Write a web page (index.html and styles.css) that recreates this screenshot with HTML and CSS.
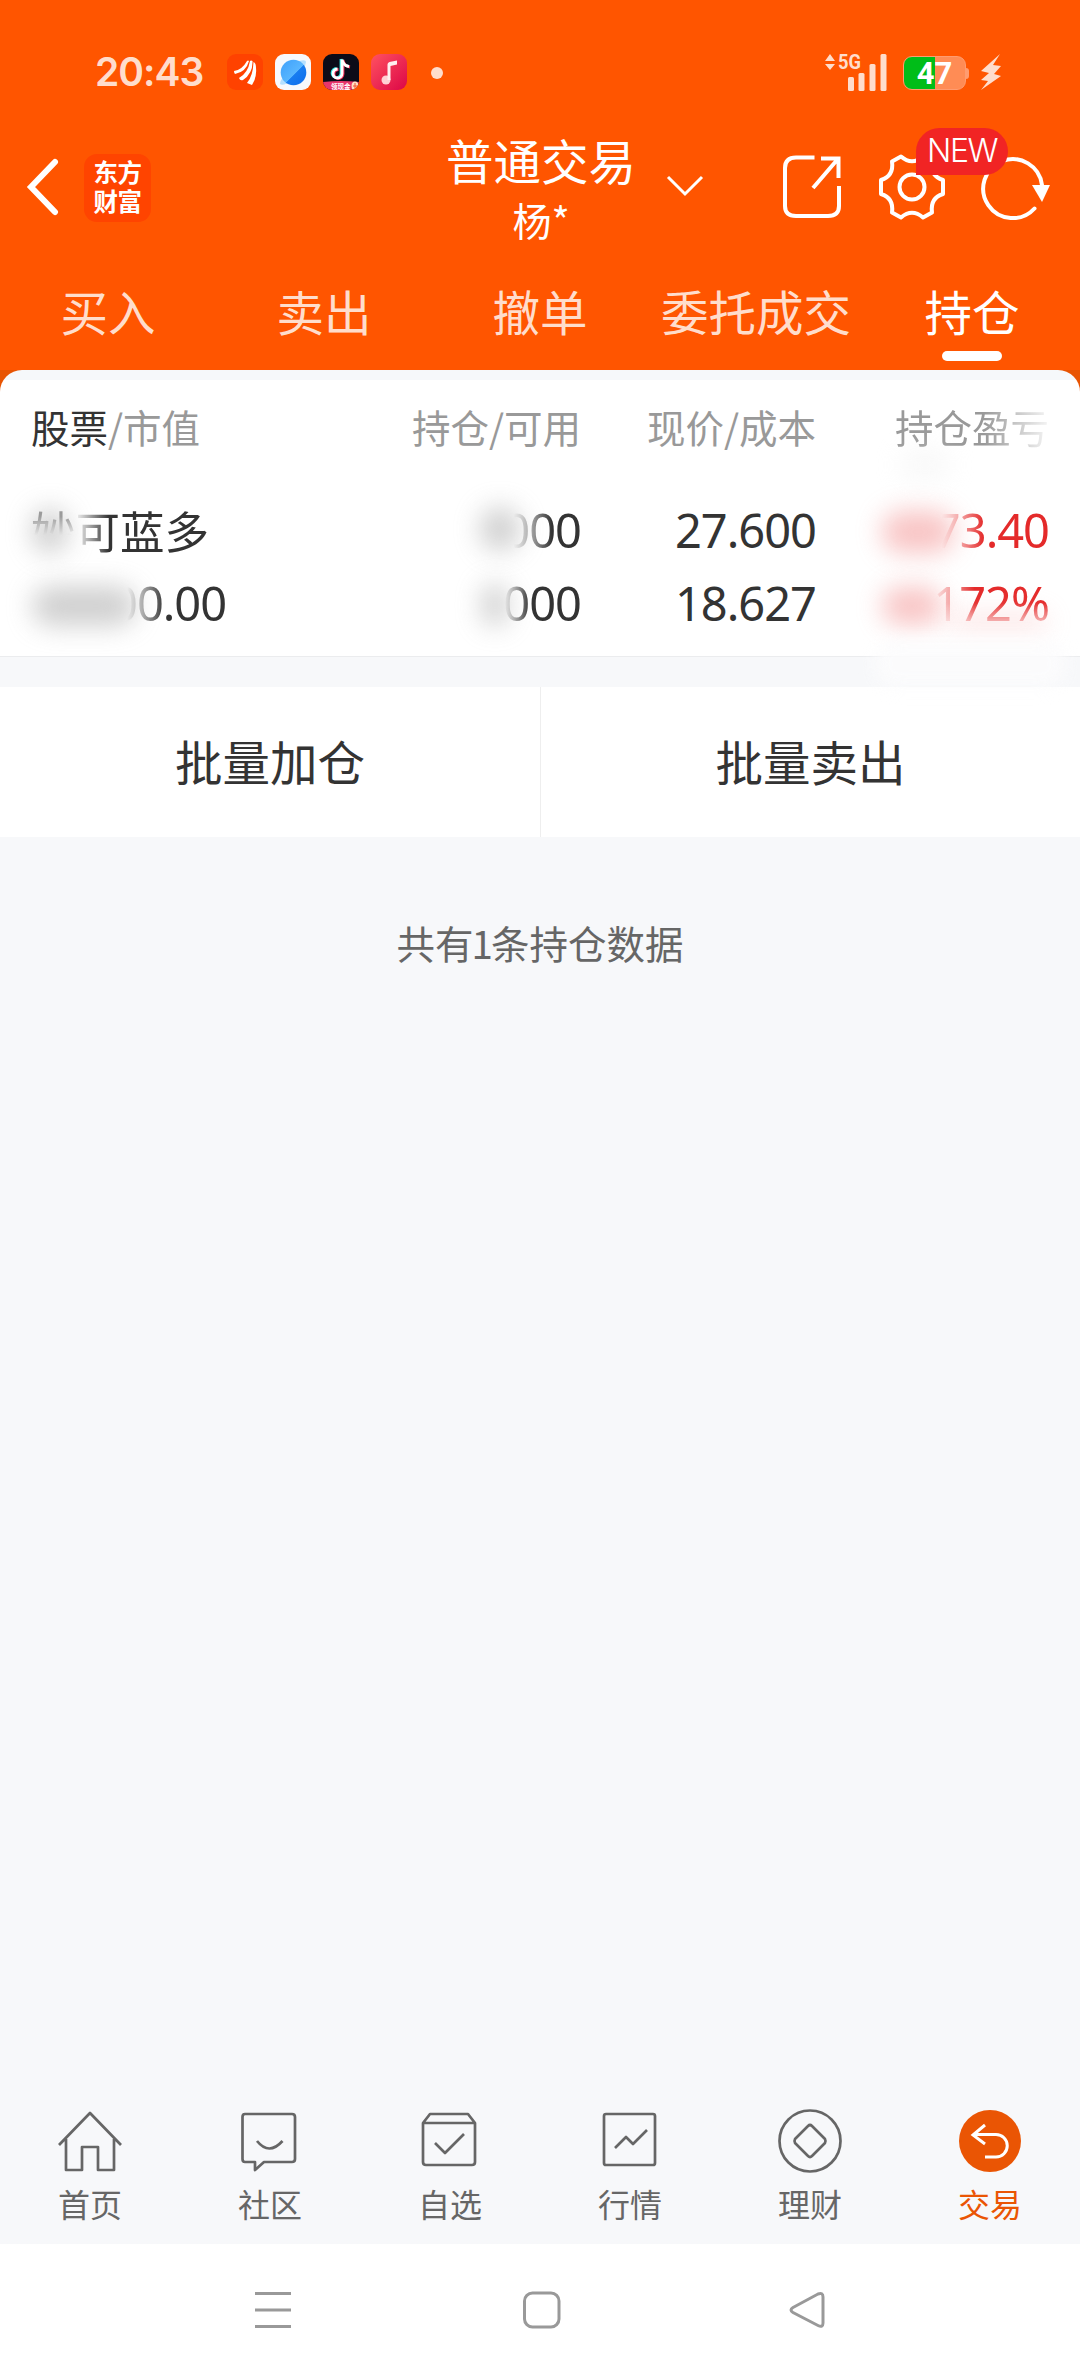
FILE: index.html
```html
<!DOCTYPE html>
<html lang="zh-CN">
<head>
<meta charset="utf-8">
<title>持仓</title>
<link rel="stylesheet" href="styles.css">
</head>
<body>
<div class="screen">
  <header class="header">
    <div class="status">
      <span class="clock">20:43</span>
      <div class="apps">
        <svg width="36" height="36" viewBox="0 0 36 36"><rect width="36" height="36" rx="9" fill="#ff4200"/><path d="M7 17Q15 16 20 7Q21 6 22 7Q19 18 8 20Q7 19 7 17ZM12 24Q21 19 23 7Q24 6 25.500 7Q26 19 16 26Q13 27 12 24ZM20 29Q26 22 26.500 8Q29 9 29 14Q30 23 25 31Z" fill="#fff"/></svg>
        <svg width="36" height="36" viewBox="0 0 36 36"><defs><linearGradient id="planet" x1="0" y1="0" x2="1" y2="1"><stop offset="0" stop-color="#3fa0fa"/><stop offset=".55" stop-color="#58b6ff"/><stop offset=".56" stop-color="#187cf0"/><stop offset="1" stop-color="#0c6cec"/></linearGradient></defs><rect width="36" height="36" rx="9" fill="#f7f9fc"/><path d="M24 7Q31 5 31 8Q30 17 19 25Q8 33 5 30Q5 27 8 23Z" fill="#b5e0ff"/><circle cx="18.500" cy="18.500" r="12.800" fill="url(#planet)"/></svg>
        <svg width="36" height="36" viewBox="0 0 36 36"><defs><clipPath id="tile"><rect width="36" height="36" rx="9"/></clipPath></defs><g clip-path="url(#tile)"><rect width="36" height="36" fill="#0c0b18"/><g fill="none" stroke-width="2.800"><path d="M18 5V19A4.500 4.500 0 1 1 13.500 14.500M18 5Q19 11 25 12" stroke="#2ee6e2"/><path d="M20 6V20A4.500 4.500 0 1 1 15.500 15.500M20 6Q21 12 27 13" stroke="#f9325d"/><path d="M19 5.500V19.500A4.500 4.500 0 1 1 14.500 15M19 5.500Q20 11.500 26 12.500" stroke="#fff"/></g><path d="M0 28Q18 26 36 28V36H0Z" fill="#e8356b"/><text x="8" y="34.500" class="tile-label">领现金</text><ellipse cx="32" cy="32" rx="3.500" ry="4.500" fill="#ffe2c4"/><path d="M32 29v5M30 32h4" stroke="#f05030"/></g></svg>
        <svg width="36" height="36" viewBox="0 0 36 36"><defs><linearGradient id="music" x1="0" y1="0" x2="1" y2="1"><stop offset="0" stop-color="#ff5260"/><stop offset="1" stop-color="#dc0647"/></linearGradient></defs><rect width="36" height="36" rx="9" fill="url(#music)"/><circle cx="15" cy="26" r="4.500" fill="#ffd0d4"/><path d="M16.500 26V10.500Q16.500 8.500 18.500 8L26 6.500V10.500L19.500 12V26Z" fill="#fff0ef"/></svg>
      </div>
      <span class="dot"></span>
      <svg class="signal" width="62" height="40" viewBox="0 0 62 40"><g fill="#ffddcc"><path d="M0 9L5 2L10 9ZM0 12L5 18L10 12Z"/><rect x="23" y="25" width="6" height="14" rx="1.500"/><rect x="33.500" y="21" width="6" height="18" rx="1.500"/><rect x="44.500" y="12" width="6" height="27" rx="1.500"/><rect x="55.500" y="2" width="6" height="37" rx="1.500"/></g><text x="13" y="17" textLength="23" lengthAdjust="spacingAndGlyphs" class="network">5G</text></svg>
      <div class="battery"><span>47</span></div>
      <svg class="bolt" width="22" height="38" viewBox="0 0 22 38"><path d="M20 1L1 18L9 20L1 27L8 28L1 37L21 23L14 21L21 13L13 12Z" fill="#ffddcc"/></svg>
    </div>
    <div class="titlebar">
      <svg class="back" width="34" height="58" viewBox="0 0 34 58"><path d="M29 4L5 29L29 54" fill="none" stroke="#fff" stroke-width="6" stroke-linecap="round"/></svg>
      <div class="logo"><span>东方</span><span>财富</span></div>
      <div class="title"><span class="name">普通交易</span><span class="user">杨*</span></div>
      <svg class="chevron" width="38" height="22" viewBox="0 0 38 22"><path d="M2 2L19 19L36 2" fill="none" stroke="#fff" stroke-width="3"/></svg>
      <svg class="share" width="60" height="64" viewBox="0 0 60 64"><g fill="none" stroke="#fff" stroke-width="4"><path d="M32.500 2.500H14Q3 2.500 3 13V51Q3 61 14 61H46Q57 61 57 51V31"/><path d="M39 3.500H56.500V23M55 5L31 33"/></g></svg>
      <svg class="gear" width="66" height="66" viewBox="0 0 66 66"><g fill="none" stroke="#fff" stroke-width="4" stroke-linejoin="round"><path d="M22 2.500Q33 12 44 2.500L53 7.500Q51 22 64 26V40Q51 44 53 58.500L44 63.500Q33 54 22 63.500L13 58.500Q15 44 2 40V26Q15 22 13 7.500Z"/><circle cx="33" cy="33" r="12.500"/></g></svg>
      <div class="refresh"><svg width="72" height="66" viewBox="0 0 72 66"><path d="M54.500 53.500A29.500 29.500 0 1 1 62 30" fill="none" stroke="#fff" stroke-width="4" stroke-linecap="round"/><path d="M52 30H70L62 47Z" fill="#fff"/></svg><span class="badge">NEW</span></div>
    </div>
    <nav class="tabs"><span>买入</span><span>卖出</span><span>撤单</span><span>委托成交</span><span class="active">持仓</span></nav>
  </header>
  <main class="main">
    <section class="positions">
      <div class="row head"><span><b>股票</b>/市值</span><span>持仓/可用</span><span>现价/成本</span><span class="fade-end">持仓盈亏</span></div>
      <div class="row stock"><span class="veil-name">妙可蓝多</span><span class="num veil-a">000</span><span class="num">27.600</span><span class="num red veil-c">73.40</span></div>
      <div class="row value"><span class="num veil-value">00.00</span><span class="num veil-b">000</span><span class="num">18.627</span><span class="num red veil-d">172%</span></div>
      <i class="smudge s1"></i><i class="smudge s2"></i><i class="smudge s3"></i><i class="smudge s4"></i><i class="smudge s5"></i><i class="smudge s6"></i><i class="smudge s7"></i><i class="smudge s8"></i><i class="smudge s9"></i>
    </section>
    <div class="actions"><span>批量加仓</span><span>批量卖出</span></div>
    <p class="count">共有<span>1</span>条持仓数据</p>
  </main>
  <nav class="bottom">
    <div><svg width="64" height="68" viewBox="0 0 64 68"><path d="M1 36L32 4L63 36M8 30V61H24V38H40V61H56V30"/></svg><span>首页</span></div>
    <div><svg width="64" height="68" viewBox="0 0 64 68"><path d="M7 5H54Q57 5 57 8V50Q57 53 54 53H26L17 61V53H7Q4.500 53 4.500 50V8Q4.500 5 7 5ZM19 32Q31 47 44.500 32"/></svg><span>社区</span></div>
    <div><svg width="64" height="68" viewBox="0 0 64 68"><path d="M5 14L12 5H50L57 14V53Q57 56 54 56H8Q5 56 5 53ZM5 14H57M17 34L27 44L46 25"/></svg><span>自选</span></div>
    <div><svg width="64" height="68" viewBox="0 0 64 68"><rect x="6" y="5" width="51" height="51" rx="2"/><path d="M17 39L28 28L35 35L49 21"/></svg><span>行情</span></div>
    <div><svg width="64" height="68" viewBox="0 0 64 68"><circle cx="32" cy="32" r="30.500"/><path d="M30 17Q32 15 34 17L47 30Q48 32 47 34L34 47Q32 49 30 47L17 34Q16 32 17 30Z"/></svg><span>理财</span></div>
    <div class="current"><svg width="64" height="68" viewBox="0 0 64 68"><circle cx="32" cy="32" r="31" class="disc"/><path d="M27 16L15 26L27 35M15 25.500H38A11 11 0 0 1 38 48H27" class="arrow"/></svg><span>交易</span></div>
  </nav>
  <div class="system">
    <svg width="36" height="38" viewBox="0 0 36 38"><path d="M0 2.500H36M0 19H36M0 35.500H36"/></svg>
    <svg width="38" height="38" viewBox="0 0 38 38"><rect x="1.500" y="2" width="34.500" height="34" rx="8"/></svg>
    <svg width="38" height="38" viewBox="0 0 38 38"><path d="M4 16.500L29 3Q34 1 34 6V32Q34 37 29 34.500L4 21.500Q0 19 4 16.500Z"/></svg>
  </div>
</div>
</body>
</html>
```

FILE: styles.css
```css
* { box-sizing: border-box; }
body { margin: 0; font-family: "Noto Sans CJK SC", sans-serif; }
svg { display: block; flex: none; }
.screen { width: 1080px; height: 2376px; display: flex; flex-direction: column; background: #f7f8fa; overflow: hidden; }

.header { height: 370px; background: #ff5500; color: #fff; flex: none; }
.status { height: 144px; padding: 0 78px 0 95px; display: flex; align-items: center; }
.clock { width: 132px; font: 600 39px/50px Inter, sans-serif; letter-spacing: -1px; color: #ffddcc; }
.apps { display: flex; gap: 12px; }
.tile-label { font-size: 6.500px; font-weight: 700; fill: #fff; }
.dot { width: 12px; height: 12px; margin: 2px 0 0 24px; border-radius: 50%; background: #ffddcc; }
.signal { margin-left: auto; overflow: visible; }
.network { font: 700 21px Roboto, sans-serif; fill: #ffddcc; }
.battery { position: relative; width: 63px; height: 34px; margin: 2px 14px 0 16px; border: 1px solid #ff9c70; border-radius: 9px; background: linear-gradient(90deg, #00bd18 31px, #ff8c55 31px); text-align: center; font: 700 31px/33px Roboto, sans-serif; }
.battery::after { content: ""; position: absolute; left: 62px; top: 11px; width: 3px; height: 11px; border-radius: 0 3px 3px 0; background: #ff9c70; }

.titlebar { height: 121px; display: flex; align-items: flex-start; padding-left: 26px; }
.back { margin-top: 14px; }
.logo { width: 67px; height: 68px; margin: 10px 0 0 24px; padding-top: 3px; border-radius: 13px; background: #ff4400; display: flex; flex-direction: column; align-items: center; font-size: 24.500px; line-height: 29px; font-weight: 700; letter-spacing: -0.5px; }
.title { width: 210px; margin: -12px 0 0 285px; display: flex; flex-direction: column; align-items: center; }
.name { font-size: 47.500px; line-height: 56px; height: 56px; }
.user { font-size: 39px; line-height: 62px; }
.chevron { margin: 31px 0 0 20px; }
.share { margin: 11px 0 0 78px; }
.gear { margin: 10px 0 0 37px; }
.refresh { position: relative; margin: 11px 0 0 35px; }
.badge { position: absolute; left: -64px; top: -27px; width: 92px; height: 47px; border-radius: 24px 24px 24px 0; background: #f12424; font: 300 32px/46px Inter, sans-serif; letter-spacing: -1.5px; text-align: center; }

.tabs { display: grid; grid-template-columns: repeat(5, 1fr); height: 105px; color: #ffddcc; font-size: 47.500px; line-height: 92px; text-align: center; }
.tabs span { display: flex; flex-direction: column; align-items: center; white-space: nowrap; }
.tabs .active { color: #fff; }
.active::after { content: ""; width: 60px; height: 10px; margin-top: -6px; border-radius: 5px; background: #fff; }

.main { flex: 1; background: linear-gradient(#e85402 24px, #f7f8fa 24px); }
.positions { position: relative; height: 287px; padding: 23px 31px 0 31px; border-radius: 22px 22px 0 0; border-bottom: 1px solid #ebecee; background: linear-gradient(#f6f8fa 10px, #fff 10px); color: #333; }
.row { display: grid; grid-template-columns: 229px 321px 235px 233px; align-items: center; white-space: nowrap; }
.row > :not(:first-child) { text-align: right; }
.head { height: 66px; font-size: 38.500px; color: #999; }
.head b { font-weight: 400; color: #333; }
.stock { height: 72px; margin-top: 35px; font-size: 44.500px; line-height: 66px; }
.value { height: 74px; }
.num { font: 47px/60px "Noto Sans", sans-serif; letter-spacing: -1px; }
.red { color: #e42a2a; }
.actions { display: grid; grid-template-columns: 1fr 1fr; height: 150px; margin-top: 30px; background: #fff; color: #333; font-size: 47.500px; line-height: 147px; text-align: center; }
.actions span + span { border-left: 1px solid #eee; }
.count { margin: 75px 0 0; font-size: 38.500px; line-height: 60px; text-align: center; color: #666; }
.count span { margin: 0 -2px; }

.bottom { height: 144px; flex: none; display: grid; grid-template-columns: repeat(6, 1fr); color: #666; font-size: 32px; line-height: 44px; }
.bottom div { display: flex; flex-direction: column; align-items: center; padding-top: 9px; }
.bottom svg { fill: none; stroke: #666; stroke-width: 2.700px; stroke-linejoin: round; }
.bottom span { margin-top: 4px; }
.bottom .current { color: #ea5504; }
.bottom .disc { fill: #ea5504; stroke: none; }
.bottom .arrow { stroke: #fff; stroke-width: 3px; stroke-linejoin: miter; }
.system { height: 132px; flex: none; display: flex; align-items: flex-start; padding: 47px 0 0 255px; background: #fff; }
.system svg { fill: none; stroke: #999; stroke-width: 3px; }
.system svg + svg { margin-left: 232px; }
.system svg:last-child { margin-left: 228px; }

/* Fades that hide the private part of each figure */
.fade-end { -webkit-mask-image: linear-gradient(90deg, #000 72%, transparent 103%); }
.veil-name { -webkit-mask: linear-gradient(90deg, transparent 19%, #000 34%), linear-gradient(#0008 30%, transparent 58%) 0 0 / 20% 100% no-repeat; }
.veil-value { justify-self: start; margin-left: 80px; -webkit-mask-image: linear-gradient(90deg, transparent 16px, #000 54px); }
.veil-a { -webkit-mask-image: linear-gradient(90deg, transparent 79%, #000 91%); }
.veil-b { -webkit-mask-image: linear-gradient(90deg, transparent 76%, #000 84%); }
.veil-c { -webkit-mask-image: linear-gradient(90deg, transparent 54%, #000 72%); }
.veil-d { -webkit-mask-image: linear-gradient(#000 50%, #0006 80%), linear-gradient(90deg, transparent 50%, #000 68%); -webkit-mask-composite: source-in; mask-composite: intersect; }
.smudge { position: absolute; border-radius: 20px; filter: blur(13px); background: #b7b7b7; opacity: .65; }
.s1 { left: 32px; top: 139px; width: 36px; height: 44px; }
.s2 { left: 32px; top: 216px; width: 104px; height: 40px; }
.s3 { left: 480px; top: 137px; width: 40px; height: 44px; }
.s4 { left: 482px; top: 214px; width: 26px; height: 42px; }
.s5 { left: 882px; top: 141px; width: 72px; height: 42px; background: #f5a5a5; }
.s6 { left: 882px; top: 217px; width: 60px; height: 38px; background: #f5a5a5; }
.s7 { left: 950px; top: 244px; width: 98px; height: 16px; background: #f7b9b9; opacity: .4; }
.s8 { left: 875px; top: 270px; width: 190px; height: 48px; background: #fcfcfd; opacity: .9; filter: blur(8px); }
.s9 { left: 900px; top: 80px; width: 50px; height: 30px; background: #eee; opacity: .4; }
```
